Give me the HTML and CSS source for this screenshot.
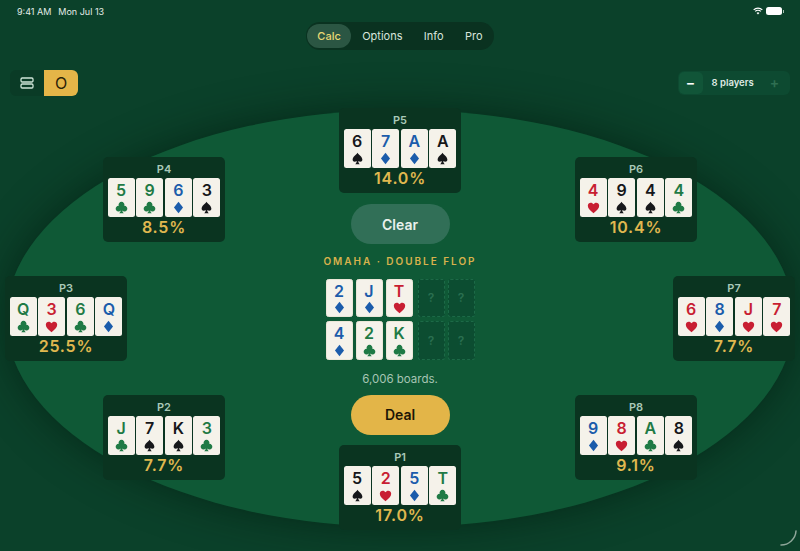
FILE: index.html
```html
<!DOCTYPE html>
<html lang="en">
<head>
  <meta charset="UTF-8">
  <meta name="viewport" content="width=device-width, initial-scale=1.0">
  <title>Omaha Calc</title>
  <link rel="stylesheet" href="styles.css">
</head>
<body>
  <svg class="defs" width="0" height="0">
    <symbol id="spade" viewBox="0 0 16 16"><path d="M8 1C6 4 2 6 2 9.500 2 11.600 4.600 12.800 7 11 7 12.600 6.400 13.800 5.200 15h5.600C9.600 13.800 9 12.600 9 11c2.400 1.800 5 .6 5-1.500C14 6 10 4 8 1z"/></symbol>
    <symbol id="heart" viewBox="0 0 16 16"><path d="M8 15C4 11.500 1 9 1 5.700 1 3.500 2.700 2 4.600 2 6 2 7.300 2.800 8 4.100 8.700 2.800 10 2 11.400 2 13.300 2 15 3.500 15 5.700 15 9 12 11.500 8 15z"/></symbol>
    <symbol id="diamond" viewBox="0 0 16 16"><path d="M8 .8 13.600 8 8 15.200 2.400 8z"/></symbol>
    <symbol id="club" viewBox="0 0 16 16"><path d="M8 1a3.600 3.600 0 0 0-3.300 5A3.500 3.500 0 1 0 7 11.800C7 13 6.400 14 5.200 15h5.600C9.600 14 9 13 9 11.800A3.500 3.500 0 1 0 11.300 6 3.600 3.600 0 0 0 8 1z"/></symbol>
  </svg>

  <div class="status">
    <div class="status-left"><span>9:41 AM</span><span>Mon Jul 13</span></div>
    <div class="status-right">
      <svg width="10" height="8" viewBox="0 0 12 9" fill="none" stroke="#fff" stroke-width="1.400"><path d="M.8 3.200a7.400 7.400 0 0 1 10.400 0M2.600 5a4.900 4.900 0 0 1 6.800 0"/><path d="M6 8.800 4.300 6.800a2.500 2.500 0 0 1 3.400 0z" fill="#fff" stroke="none"/></svg>
      <div class="battery"></div>
    </div>
  </div>

  <nav class="tabs">
    <a class="tab active">Calc</a>
    <a class="tab">Options</a>
    <a class="tab">Info</a>
    <a class="tab">Pro</a>
  </nav>

  <div class="toolbar">
    <div class="layout-switch">
      <button class="layout-btn">
        <svg width="14" height="12" viewBox="0 0 14 12" fill="none" stroke="#cfe5d8" stroke-width="1.300"><rect x="1" y="1" width="12" height="4" rx="1.200"/><rect x="1" y="7" width="12" height="4" rx="1.200"/></svg>
      </button>
      <button class="layout-btn on">O</button>
    </div>
    <div class="players">
      <button class="step">&minus;</button>
      <span class="players-label">8 players</span>
      <button class="step off">+</button>
    </div>
  </div>

  <main class="table">
    <div class="felt"></div>

    <section class="seat p5">
      <h4>P5</h4>
      <div class="hand">
        <div class="card black"><b>6</b><svg><use href="#spade"/></svg></div>
        <div class="card blue"><b>7</b><svg><use href="#diamond"/></svg></div>
        <div class="card blue"><b>A</b><svg><use href="#diamond"/></svg></div>
        <div class="card black"><b>A</b><svg><use href="#spade"/></svg></div>
      </div>
      <p class="pct">14.0%</p>
    </section>

    <section class="seat p4">
      <h4>P4</h4>
      <div class="hand">
        <div class="card green"><b>5</b><svg><use href="#club"/></svg></div>
        <div class="card green"><b>9</b><svg><use href="#club"/></svg></div>
        <div class="card blue"><b>6</b><svg><use href="#diamond"/></svg></div>
        <div class="card black"><b>3</b><svg><use href="#spade"/></svg></div>
      </div>
      <p class="pct">8.5%</p>
    </section>

    <section class="seat p6">
      <h4>P6</h4>
      <div class="hand">
        <div class="card red"><b>4</b><svg><use href="#heart"/></svg></div>
        <div class="card black"><b>9</b><svg><use href="#spade"/></svg></div>
        <div class="card black"><b>4</b><svg><use href="#spade"/></svg></div>
        <div class="card green"><b>4</b><svg><use href="#club"/></svg></div>
      </div>
      <p class="pct">10.4%</p>
    </section>

    <section class="seat p3">
      <h4>P3</h4>
      <div class="hand">
        <div class="card green"><b>Q</b><svg><use href="#club"/></svg></div>
        <div class="card red"><b>3</b><svg><use href="#heart"/></svg></div>
        <div class="card green"><b>6</b><svg><use href="#club"/></svg></div>
        <div class="card blue"><b>Q</b><svg><use href="#diamond"/></svg></div>
      </div>
      <p class="pct">25.5%</p>
    </section>

    <section class="seat p7">
      <h4>P7</h4>
      <div class="hand">
        <div class="card red"><b>6</b><svg><use href="#heart"/></svg></div>
        <div class="card blue"><b>8</b><svg><use href="#diamond"/></svg></div>
        <div class="card red"><b>J</b><svg><use href="#heart"/></svg></div>
        <div class="card red"><b>7</b><svg><use href="#heart"/></svg></div>
      </div>
      <p class="pct">7.7%</p>
    </section>

    <section class="seat p2">
      <h4>P2</h4>
      <div class="hand">
        <div class="card green"><b>J</b><svg><use href="#club"/></svg></div>
        <div class="card black"><b>7</b><svg><use href="#spade"/></svg></div>
        <div class="card black"><b>K</b><svg><use href="#spade"/></svg></div>
        <div class="card green"><b>3</b><svg><use href="#club"/></svg></div>
      </div>
      <p class="pct">7.7%</p>
    </section>

    <section class="seat p8">
      <h4>P8</h4>
      <div class="hand">
        <div class="card blue"><b>9</b><svg><use href="#diamond"/></svg></div>
        <div class="card red"><b>8</b><svg><use href="#heart"/></svg></div>
        <div class="card green"><b>A</b><svg><use href="#club"/></svg></div>
        <div class="card black"><b>8</b><svg><use href="#spade"/></svg></div>
      </div>
      <p class="pct">9.1%</p>
    </section>

    <section class="seat p1">
      <h4>P1</h4>
      <div class="hand">
        <div class="card black"><b>5</b><svg><use href="#spade"/></svg></div>
        <div class="card red"><b>2</b><svg><use href="#heart"/></svg></div>
        <div class="card blue"><b>5</b><svg><use href="#diamond"/></svg></div>
        <div class="card green"><b>T</b><svg><use href="#club"/></svg></div>
      </div>
      <p class="pct">17.0%</p>
    </section>

    <section class="center">
      <button class="big clear">Clear</button>
      <h2 class="game">OMAHA · DOUBLE FLOP</h2>
      <div class="board">
        <div class="card blue"><b>2</b><svg><use href="#diamond"/></svg></div>
        <div class="card blue"><b>J</b><svg><use href="#diamond"/></svg></div>
        <div class="card red"><b>T</b><svg><use href="#heart"/></svg></div>
        <div class="card empty">?</div>
        <div class="card empty">?</div>
        <div class="card blue"><b>4</b><svg><use href="#diamond"/></svg></div>
        <div class="card green"><b>2</b><svg><use href="#club"/></svg></div>
        <div class="card green"><b>K</b><svg><use href="#club"/></svg></div>
        <div class="card empty">?</div>
        <div class="card empty">?</div>
      </div>
      <p class="count">6,006 boards.</p>
      <button class="big deal">Deal</button>
    </section>
  </main>

  <svg class="home-corner" width="18" height="18" viewBox="0 0 18 18" fill="none" stroke="#8fa79a" stroke-width="1.500" stroke-linecap="round"><path d="M16 1A15 15 0 0 1 1 15"/></svg>
</body>
</html>
```

FILE: styles.css
```css
* {
  box-sizing: border-box;
}
html, body {
  height: 100%;
}
body {
  margin: 0;
  width: 800px;
  height: 551px;
  overflow: hidden;
  position: relative;
  font-family: "Inter", "Liberation Sans", sans-serif;
  background: #0b412a;
  color: #fff;
}
.defs {
  position: absolute;
}
button {
  font-family: inherit;
  border: none;
  padding: 0;
}

.status {
  display: flex;
  justify-content: space-between;
  align-items: center;
  height: 22px;
  padding: 0 17px;
  font-size: 9px;
  color: #e4ece7;
}
.status-left {
  display: flex;
  gap: 7px;
}
.status-right {
  display: flex;
  align-items: center;
  gap: 3px;
  margin-right: 1px;
}
.battery {
  position: relative;
  width: 16px;
  height: 8px;
  border-radius: 2.500px;
  background: #fff;
}
.battery::after {
  content: "";
  position: absolute;
  right: -2px;
  top: 2.500px;
  width: 1px;
  height: 3px;
  background: #a9c0b3;
}

.tabs {
  display: flex;
  width: max-content;
  margin: 0 auto;
  height: 28px;
  padding: 2px 1px;
  border-radius: 14px;
  background: #0a3220;
  font-size: 11px;
  color: #d8e5dc;
}
.tab {
  display: flex;
  align-items: center;
  padding: 0 10.700px;
  border-radius: 12px;
}
.tab.active {
  background: #2b5643;
  color: #e8d873;
  font-weight: 500;
}

.toolbar {
  display: flex;
  justify-content: space-between;
  align-items: flex-start;
  margin-top: 19.500px;
  padding: 0 10px;
}
.layout-switch {
  display: flex;
  height: 26px;
  border-radius: 6px;
  overflow: hidden;
  background: #0a3b26;
}
.layout-btn {
  width: 34px;
  background: transparent;
  display: flex;
  align-items: center;
  justify-content: center;
}
.layout-btn.on {
  background: #e5b548;
  color: #2c2208;
  font-size: 16px;
}
.players {
  display: flex;
  align-items: center;
  width: 112px;
  height: 24px;
  padding: 1px;
  margin: 1px 0.500px 0 0;
  border-radius: 6px;
  background: #0d4a31;
}
.step {
  width: 24px;
  height: 22px;
  border-radius: 5px;
  background: #115538;
  color: #fff;
  font-size: 14px;
  font-weight: 600;
  line-height: 20px;
}
.step.off {
  background: transparent;
  color: #2f6f52;
  padding-right: 4px;
}
.players-label {
  flex: 1;
  padding-left: 9px;
  font-size: 9.500px;
  font-weight: 600;
  color: #dfe9e3;
  white-space: nowrap;
}

.felt {
  position: absolute;
  left: 6px;
  top: 110px;
  width: 788px;
  height: 417px;
  border-radius: 50%;
  background: #0f5936;
  box-shadow: 0 0 40px rgba(3, 25, 14, 0.6);
}

.seat {
  position: absolute;
  width: 122px;
  height: 85px;
  padding-top: 6px;
  border-radius: 5px;
  background: #0a3420;
  display: flex;
  flex-direction: column;
  align-items: center;
}
.seat h4 {
  margin: 0;
  font-size: 11px;
  line-height: 13px;
  font-weight: 600;
  color: #a9c9b8;
}
.hand {
  display: flex;
  gap: 1.600px;
  margin-top: 2px;
}
.pct {
  margin: 0;
  font-size: 16px;
  line-height: 21px;
  font-weight: 600;
  letter-spacing: 0.8px;
  color: #e0b84f;
}
.p5 { left: 339px; top: 108px; }
.p4 { left: 103px; top: 157px; }
.p6 { left: 575px; top: 157px; }
.p3 { left: 5px; top: 276px; }
.p7 { left: 673px; top: 276px; }
.p2 { left: 103px; top: 395px; }
.p8 { left: 575px; top: 395px; }
.p1 { left: 339px; top: 445px; }

.card {
  width: 27px;
  height: 38.500px;
  border-radius: 2.500px;
  background: #f5f2ea;
  display: flex;
  flex-direction: column;
  align-items: center;
  padding-top: 3px;
}
.card b {
  font-size: 16px;
  line-height: 18px;
  font-weight: 600;
}
.card svg {
  width: 13px;
  height: 13px;
  margin-top: 1.500px;
  fill: currentColor;
}
.black { color: #16171a; }
.blue { color: #1b5cab; }
.red { color: #c81e32; }
.green { color: #1f7a45; }

.center {
  position: absolute;
  left: 300px;
  top: 204px;
  width: 200px;
  display: flex;
  flex-direction: column;
  align-items: center;
}
.big {
  flex-shrink: 0;
  width: 99px;
  height: 40px;
  border-radius: 20px;
  font-size: 14px;
  font-weight: 600;
}
.clear {
  background: #316f57;
  color: #e9f1ec;
}
.deal {
  margin-top: 9px;
  background: #e3b548;
  color: #1d1606;
}
.game {
  margin: 10px 0 0;
  font-size: 10px;
  line-height: 14px;
  font-weight: 600;
  letter-spacing: 1.970px;
  color: #d8b24c;
  white-space: nowrap;
}
.board {
  display: grid;
  grid-template-columns: 27px 27px 29px 27px 27px;
  column-gap: 3px;
  row-gap: 4px;
  margin-top: 10.700px;
}
.board .card {
  border: 1px solid #ebe7d8;
  padding-top: 2px;
}
.board .empty {
  background: #0c4d31;
  border: 1px dashed #1c6a47;
  color: #2a6f50;
  font-size: 12px;
  font-weight: 600;
  justify-content: center;
  padding: 0;
}
.count {
  margin: 12.300px 0 0;
  font-size: 11.500px;
  line-height: 14px;
  color: #a6c5b4;
}

.home-corner {
  position: absolute;
  right: 2.500px;
  bottom: 3px;
}
```
